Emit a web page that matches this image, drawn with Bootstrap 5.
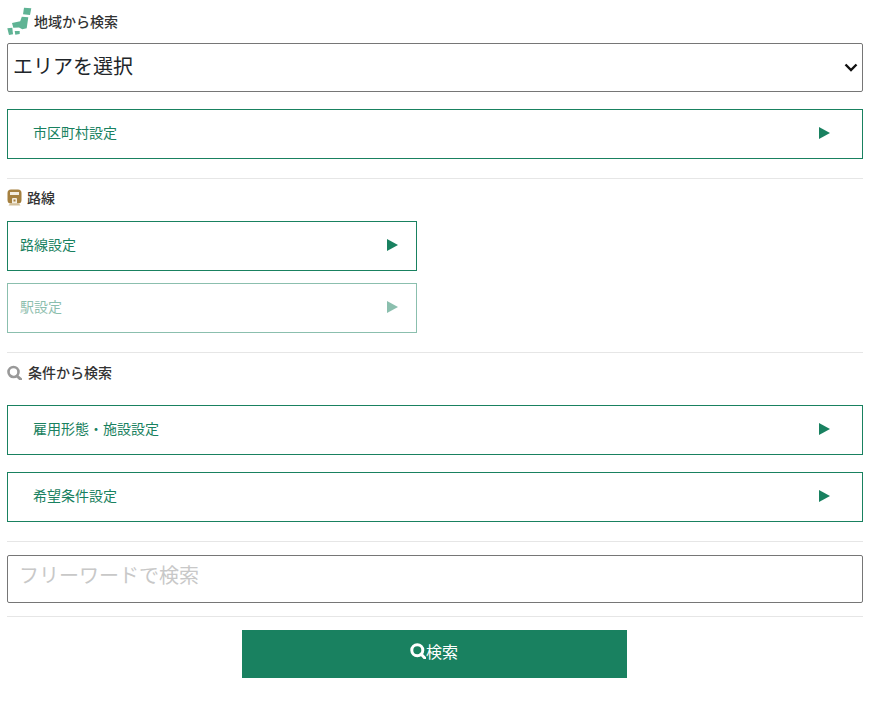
<!DOCTYPE html>
<html lang="ja">
<head>
<meta charset="utf-8">
<title>検索</title>
<link href="https://cdn.jsdelivr.net/npm/bootstrap@5.3.0/dist/css/bootstrap.min.css" rel="stylesheet">
<style>
body { font-family: "Noto Sans CJK JP", "Liberation Sans", sans-serif; background: #fff; color: #333; }
.search-wrap { padding: 0 9px 0 7px; }
.sec-head { font-size: 14px; font-weight: 500; color: #333; line-height: 20px; height: 20px; gap: 5px; }
.sec-head svg { flex: none; }
.head-area { margin-top: 11px; margin-bottom: 12px; gap: 2px; }
.head-line { margin-bottom: 14px; }
.head-cond { margin-bottom: 23px; gap: 6px; }
.area-select { height: 49px; border: 1px solid #767676; border-radius: 2px; font-size: 20px; font-weight: 400; color: #212529; padding: 0 10px 3px 5px; box-shadow: none; background-image: url("data:image/svg+xml,%3csvg xmlns='http://www.w3.org/2000/svg' viewBox='0 0 14 9'%3e%3cpath fill='none' stroke='%23111' stroke-width='2.4' d='M1.5 1.5 7 7l5.5-5.5'/%3e%3c/svg%3e"); background-size: 14px 9px; background-position: right 4px center; }
.pick-btn { height: 50px; border: 1px solid #198160; border-radius: 0; background: #fff; color: #198160; font-size: 14px; padding: 0 32px 0 25px; text-align: left; }
.pick-btn span { padding-bottom: 4px; }
.pick-btn:hover { background: #fff; color: #198160; border-color: #198160; }
.pick-btn.narrow { width: 410px; padding: 0 18px 0 12px; }
.pick-btn svg { display: block; margin-bottom: 2px; }
.pick-btn:disabled { background: #fff; color: #198160; border-color: #198160; opacity: .5; }
.rule { border: 0; border-top: 1px solid #e6e6e6; opacity: 1; margin: 0; }
.rule-a { margin-top: 19px; margin-bottom: 8px; }
.rule-b { margin-top: 19px; margin-bottom: 9px; }
.rule-d { margin-top: 19px; margin-bottom: 13px; }
.rule-c { margin: 13px 0; }
.word-input { height: 48px; border: 1px solid #767676; border-radius: 2px; font-size: 20px; padding: 0 11px 10px; }
.word-input::placeholder { color: #c8c8c8; }
.go-row { padding-right: 2px; }
.go-btn { width: 385px; height: 48px; background: #198160; border: 0; border-radius: 0; color: #fff; font-size: 16px; font-weight: 400; padding: 0 0 6px; }
.go-btn:hover { background: #198160; color: #fff; }
.gap-a { margin-bottom: 17px; }
.gap-c { margin-bottom: 12px; }
</style>
</head>
<body>
<main class="search-wrap">
  <div class="sec-head head-area d-flex align-items-center">
    <svg width="25" height="28" viewBox="0 0 25 28" aria-hidden="true">
      <g fill="#5fb394">
        <path d="M17 0.7 L24.3 1.3 L23 8 L16 7.3 Z"/>
        <path d="M14.8 9.7 L21.3 10.3 L19.7 21.3 L15.3 22.3 L12 20.5 L6.3 20.7 L5 16 L13.2 14.2 Z"/>
        <path d="M0.3 21.3 L5.3 20.7 L6 27.3 L2 28 Z"/>
        <path d="M7.7 24 L12.7 24 L12.7 27 L8.3 27.7 Z"/>
      </g>
    </svg>
    <span>地域から検索</span>
  </div>
  <select class="form-select area-select gap-a" aria-label="エリアを選択">
    <option>エリアを選択</option>
  </select>
  <button type="button" class="btn pick-btn d-flex w-100 justify-content-between align-items-center">
    <span>市区町村設定</span>
    <svg width="11" height="12" viewBox="0 0 11 12"><path d="M0 0 L11 6 L0 12 Z" fill="#198160"/></svg>
  </button>
  <hr class="rule rule-a">
  <div class="sec-head head-line d-flex align-items-center">
    <svg width="15" height="17" viewBox="0 0 15 17" aria-hidden="true">
      <path d="M4 0.5 H11 A3.5 3.5 0 0 1 14.5 4 V11 A3.5 3.5 0 0 1 11 14.5 H4 A3.5 3.5 0 0 1 0.5 11 V4 A3.5 3.5 0 0 1 4 0.5 Z" fill="#a5803f"/>
      <rect x="3" y="3" width="9" height="3" fill="#f3ede0"/>
      <path d="M5 14.5 V10 A1 1 0 0 1 6 9 H9 A1 1 0 0 1 10 10 V14.5 Z" fill="#f3ede0"/>
      <rect x="6.5" y="10.5" width="2" height="2" fill="#a5803f"/>
      <path d="M3 14.5 H12 L13.5 16.5 H1.5 Z" fill="#d2bf9a"/>
    </svg>
    <span>路線</span>
  </div>
  <button type="button" class="btn pick-btn narrow d-flex justify-content-between align-items-center gap-c">
    <span>路線設定</span>
    <svg width="11" height="12" viewBox="0 0 11 12"><path d="M0 0 L11 6 L0 12 Z" fill="#198160"/></svg>
  </button>
  <button type="button" class="btn pick-btn narrow d-flex justify-content-between align-items-center" disabled>
    <span>駅設定</span>
    <svg width="11" height="12" viewBox="0 0 11 12"><path d="M0 0 L11 6 L0 12 Z" fill="#198160"/></svg>
  </button>
  <hr class="rule rule-b">
  <div class="sec-head head-cond d-flex align-items-center">
    <svg width="15" height="16" viewBox="0 0 15 16" aria-hidden="true">
      <circle cx="6.5" cy="8" r="5" fill="none" stroke="#999" stroke-width="2.6"/>
      <path d="M10 12 L13.8 15.4" stroke="#999" stroke-width="3" stroke-linecap="round"/>
    </svg>
    <span>条件から検索</span>
  </div>
  <button type="button" class="btn pick-btn d-flex w-100 justify-content-between align-items-center gap-a">
    <span>雇用形態・施設設定</span>
    <svg width="11" height="12" viewBox="0 0 11 12"><path d="M0 0 L11 6 L0 12 Z" fill="#198160"/></svg>
  </button>
  <button type="button" class="btn pick-btn d-flex w-100 justify-content-between align-items-center">
    <span>希望条件設定</span>
    <svg width="11" height="12" viewBox="0 0 11 12"><path d="M0 0 L11 6 L0 12 Z" fill="#198160"/></svg>
  </button>
  <hr class="rule rule-d">
  <input type="text" class="form-control word-input" placeholder="フリーワードで検索" aria-label="フリーワードで検索">
  <hr class="rule rule-c">
  <div class="go-row d-flex justify-content-center">
    <button type="button" class="btn go-btn d-flex align-items-center justify-content-center">
      <svg width="16" height="16" viewBox="0 0 16 16" aria-hidden="true">
        <circle cx="7.3" cy="7.3" r="5.5" fill="none" stroke="#fff" stroke-width="3"/>
        <path d="M11 11 L14.8 15" stroke="#fff" stroke-width="3" stroke-linecap="round"/>
      </svg>
      <span>検索</span>
    </button>
  </div>
</main>
</body>
</html>
